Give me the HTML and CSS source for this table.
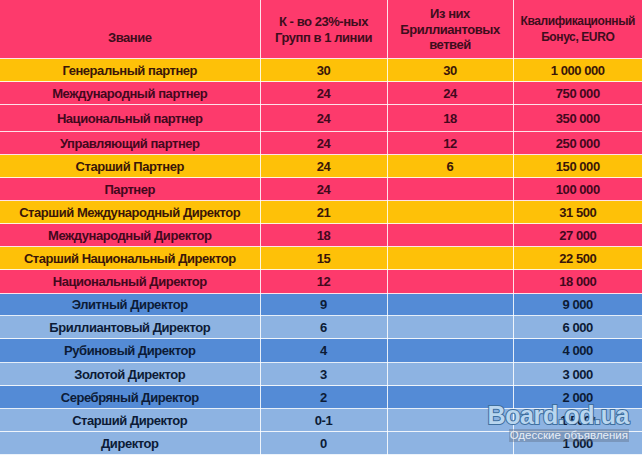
FILE: index.html
```html
<!DOCTYPE html>
<html lang="ru">
<head>
<meta charset="utf-8">
<title>Квалификации</title>
<link rel="stylesheet" href="styles.css">
</head>
<body>
<div class="wrap">
<table class="ranks">
  <colgroup>
    <col class="c1"><col class="c2"><col class="c3"><col class="c4">
  </colgroup>
  <thead>
    <tr class="head">
      <th class="title">Звание</th>
      <th>К - во 23%-ных<br>Групп в 1 линии</th>
      <th>Из них<br>Бриллиантовых<br>ветвей</th>
      <th class="small">Квалификационный<br>Бонус, EURO</th>
    </tr>
  </thead>
  <tbody>
    <tr class="or h23"><td>Генеральный партнер</td><td>30</td><td>30</td><td>1 000 000</td></tr>
    <tr class="pk h23"><td>Международный партнер</td><td>24</td><td>24</td><td>750 000</td></tr>
    <tr class="pk h27"><td>Национальный партнер</td><td>24</td><td>18</td><td>350 000</td></tr>
    <tr class="pk h23"><td>Управляющий партнер</td><td>24</td><td>12</td><td>250 000</td></tr>
    <tr class="or h23"><td>Старший Партнер</td><td>24</td><td>6</td><td>150 000</td></tr>
    <tr class="pk h23"><td>Партнер</td><td>24</td><td></td><td>100 000</td></tr>
    <tr class="or h23"><td>Старший Международный Директор</td><td>21</td><td></td><td>31 500</td></tr>
    <tr class="pk h23"><td>Международный Директор</td><td>18</td><td></td><td>27 000</td></tr>
    <tr class="or h23"><td>Старший Национальный Директор</td><td>15</td><td></td><td>22 500</td></tr>
    <tr class="pk h24"><td>Национальный Директор</td><td>12</td><td></td><td>18 000</td></tr>
    <tr class="bd h22"><td>Элитный Директор</td><td>9</td><td></td><td>9 000</td></tr>
    <tr class="bl h23"><td>Бриллиантовый Директор</td><td>6</td><td></td><td>6 000</td></tr>
    <tr class="bd h24"><td>Рубиновый Директор</td><td>4</td><td></td><td>4 000</td></tr>
    <tr class="bl h23"><td>Золотой Директор</td><td>3</td><td></td><td>3 000</td></tr>
    <tr class="bd h23"><td>Серебряный Директор</td><td>2</td><td></td><td>2 000</td></tr>
    <tr class="bl h23"><td>Старший Директор</td><td>0-1</td><td></td><td>1 500*</td></tr>
    <tr class="bl h23"><td>Директор</td><td>0</td><td></td><td>1 000</td></tr>
  </tbody>
</table>
<div class="mark">
  <div class="mark-name">Board.od.ua</div>
  <div class="mark-sub">Одесские объявления</div>
</div>
</div>
</body>
</html>
```

FILE: styles.css
```css
html, body {
  margin: 0;
  padding: 0;
  background: #ffffff;
}
.wrap {
  position: relative;
  width: 642px;
  height: 455px;
  overflow: hidden;
}
.ranks {
  width: 642px;
  border-collapse: collapse;
  table-layout: fixed;
  font-family: "Liberation Sans", Arial, sans-serif;
  font-weight: bold;
  font-size: 13px;
  letter-spacing: -0.45px;
}
.c1 { width: 260px; }
.c2 { width: 127px; }
.c3 { width: 126px; }
.c4 { width: 129px; }

.ranks th, .ranks td {
  padding: 0;
  text-align: center;
  vertical-align: middle;
  border: 1px solid rgba(255, 255, 255, 0.85);
  border-top: none;
  white-space: nowrap;
}
.ranks tr > :first-child { border-left: none; }
.ranks tr > :last-child { border-right: none; }

.head th {
  height: 57px;
  background: #fd3a6c;
  color: #3e0d1c;
  line-height: 15.5px;
  padding-top: 1px;
}
.head th.title {
  vertical-align: bottom;
  padding-bottom: 13px;
  height: 44px;
}
.head th.small {
  font-size: 12px;
  letter-spacing: -0.4px;
}

.h22 td { height: 21px; }
.h23 td { height: 22px; }
.h24 td { height: 23px; }
.h27 td { height: 26px; }

.or td { background: #fec108; color: #3a1608; }
.pk td { background: #fd3a6c; color: #42081d; }
.bd td { background: #548bd6; color: #0c1b36; }
.bl td { background: #8db3e2; color: #0c1b36; }

.mark {
  position: absolute;
  right: 13px;
  bottom: 13px;
  display: flex;
  flex-direction: column;
  align-items: flex-end;
  font-family: "Liberation Sans", Arial, sans-serif;
}
.mark-name {
  font-size: 25px;
  font-weight: bold;
  line-height: 25px;
  color: #b9d6ef;
  -webkit-text-stroke: 2px #3f6f9e;
  paint-order: stroke fill;
  letter-spacing: -0.4px;
}
.mark-sub {
  font-size: 11.5px;
  line-height: 13px;
  color: #e8eef6;
  background: rgba(90, 100, 120, 0.35);
  padding: 0 1px;
  margin-top: 1px;
}
```
